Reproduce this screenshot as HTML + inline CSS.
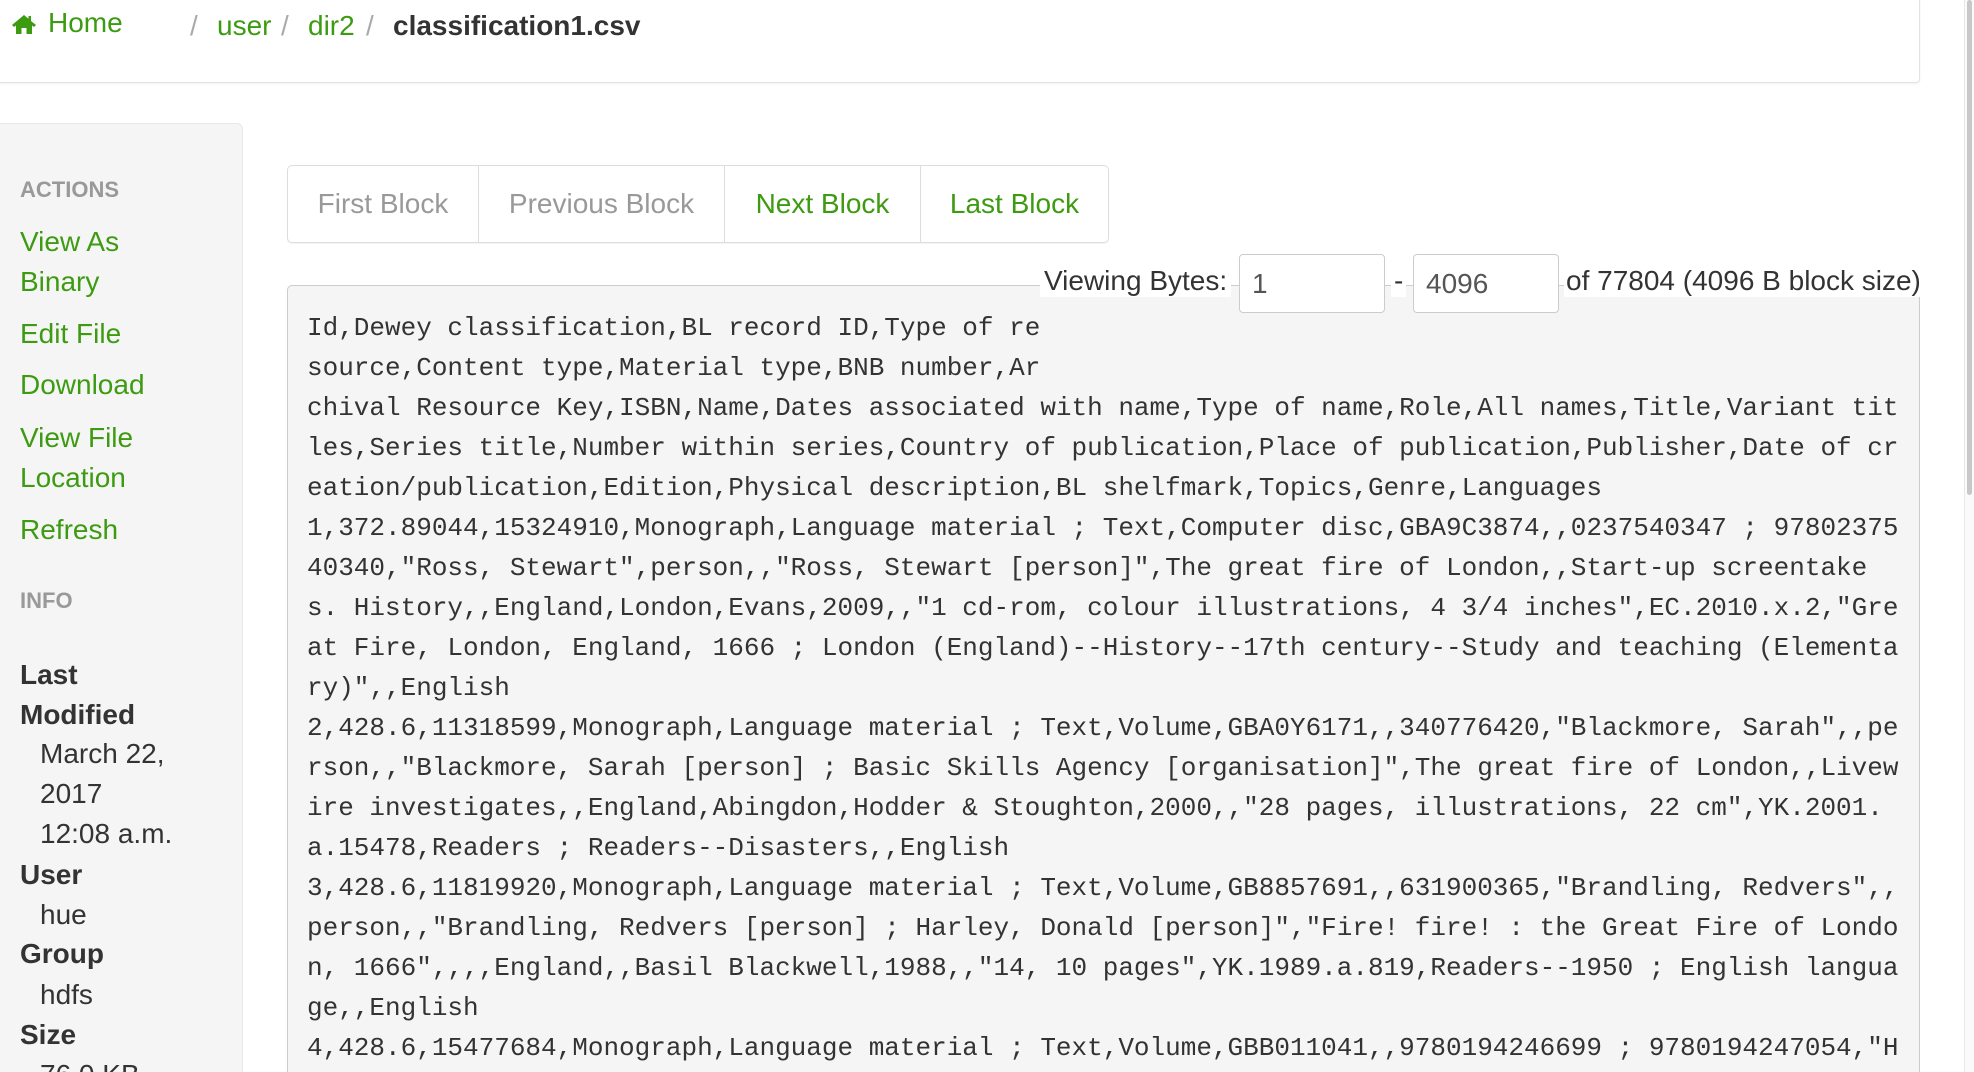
<!DOCTYPE html>
<html style="overflow:hidden;height:1072px"><head><meta charset="utf-8"><style>
*{margin:0;padding:0;box-sizing:border-box}
body{width:1974px;height:1072px;overflow:hidden;background:#fff;font-family:"Liberation Sans",sans-serif;position:relative;color:#333}
.a{position:absolute;white-space:nowrap}
.g{color:#3d9b11}
#top{position:absolute;left:-10px;top:-10px;width:1930px;height:93px;border:1px solid #e3e3e3;border-radius:4px;box-shadow:0 1px 2px rgba(0,0,0,.06)}
#side{position:absolute;left:-10px;top:123px;width:253px;height:960px;background:#f5f5f5;border:1px solid #e8e8e8;border-radius:6px}
.s{position:absolute;left:20px;font-size:28px;line-height:40px;white-space:nowrap}
.h{position:absolute;left:20px;font-size:22px;font-weight:bold;color:#999}
.b{font-weight:bold;color:#333}
#btns{position:absolute;left:287px;top:165px;height:78px;border:1px solid #ddd;border-radius:5px;display:flex;font-size:28px;box-shadow:0 1px 1px rgba(0,0,0,.05)}
#btns div{height:76px;line-height:76px;text-align:center;border-left:1px solid #ddd}
#btns div:first-child{border-left:none}
#pre{position:absolute;left:287px;top:285px;width:1633px;height:820px;background:#f5f5f5;border:1px solid #ccc;border-radius:5px}
#txt{position:absolute;left:307px;top:308px;font-family:"Liberation Mono",monospace;font-size:26px;line-height:40px;color:#333;white-space:pre}
.inp{position:absolute;top:254px;height:59px;width:146px;border:1px solid #ccc;border-radius:4px;background:#fff;font-size:28px;line-height:57px;padding-left:12px;color:#555}
</style></head><body>
<div id="top"></div>
<svg class="a" style="left:11px;top:13px" width="26" height="22" viewBox="0 0 26 22"><path d="M13 2 L1 12 L3 14 L5 12.5 V21 H10.5 V15 H15.5 V21 H21 V12.5 L23 14 L25 12 L20 8 V3 H17.5 V5.8 Z" fill="#3d9b11"/></svg>
<div class="a g" style="left:48px;top:7px;font-size:28px">Home</div>
<div class="a" style="left:190px;top:10px;font-size:28px;color:#aaa">/</div>
<div class="a g" style="left:217px;top:10px;font-size:28px">user</div>
<div class="a" style="left:281px;top:10px;font-size:28px;color:#aaa">/</div>
<div class="a g" style="left:308px;top:10px;font-size:28px">dir2</div>
<div class="a" style="left:366px;top:10px;font-size:28px;color:#aaa">/</div>
<div class="a b" style="left:393px;top:10px;font-size:28px">classification1.csv</div>

<div id="side"></div>
<div class="h" style="top:177px">ACTIONS</div>
<div class="s g" style="top:222px">View As<br>Binary</div>
<div class="s g" style="top:314px">Edit File</div>
<div class="s g" style="top:365px">Download</div>
<div class="s g" style="top:418px">View File<br>Location</div>
<div class="s g" style="top:510px">Refresh</div>
<div class="h" style="top:588px">INFO</div>
<div class="s b" style="top:655px">Last<br>Modified</div>
<div class="s" style="top:734px;left:40px">March 22,<br>2017<br>12:08 a.m.</div>
<div class="s b" style="top:855px">User</div>
<div class="s" style="top:895px;left:40px">hue</div>
<div class="s b" style="top:934px">Group</div>
<div class="s" style="top:975px;left:40px">hdfs</div>
<div class="s b" style="top:1015px">Size</div>
<div class="s" style="top:1055px;left:40px">76.0 KB</div>

<div id="btns"><div style="color:#999;width:190px">First Block</div><div style="color:#999;width:246px">Previous Block</div><div class="g" style="width:196px">Next Block</div><div class="g" style="width:188px">Last Block</div></div>

<div id="pre"></div>
<div class="a" style="left:1040px;top:265px;font-size:28px;background:#fff;padding:0 4px">Viewing Bytes:</div>
<div class="inp" style="left:1239px">1</div>
<div class="a" style="left:1391px;top:265px;font-size:28px;background:#fff;padding:0 3px">-</div>
<div class="inp" style="left:1413px">4096</div>
<div class="a" style="left:1564px;top:265px;font-size:28px;background:#fff;padding:0 2px">of 77804 (4096 B block size)</div>

<div id="txt">Id,Dewey classification,BL record ID,Type of re
source,Content type,Material type,BNB number,Ar
chival Resource Key,ISBN,Name,Dates associated with name,Type of name,Role,All names,Title,Variant tit
les,Series title,Number within series,Country of publication,Place of publication,Publisher,Date of cr
eation/publication,Edition,Physical description,BL shelfmark,Topics,Genre,Languages
1,372.89044,15324910,Monograph,Language material ; Text,Computer disc,GBA9C3874,,0237540347 ; 97802375
40340,"Ross, Stewart",person,,"Ross, Stewart [person]",The great fire of London,,Start-up screentake
s. History,,England,London,Evans,2009,,"1 cd-rom, colour illustrations, 4 3/4 inches",EC.2010.x.2,"Gre
at Fire, London, England, 1666 ; London (England)--History--17th century--Study and teaching (Elementa
ry)",,English
2,428.6,11318599,Monograph,Language material ; Text,Volume,GBA0Y6171,,340776420,"Blackmore, Sarah",,pe
rson,,"Blackmore, Sarah [person] ; Basic Skills Agency [organisation]",The great fire of London,,Livew
ire investigates,,England,Abingdon,Hodder &amp; Stoughton,2000,,"28 pages, illustrations, 22 cm",YK.2001.
a.15478,Readers ; Readers--Disasters,,English
3,428.6,11819920,Monograph,Language material ; Text,Volume,GB8857691,,631900365,"Brandling, Redvers",,
person,,"Brandling, Redvers [person] ; Harley, Donald [person]","Fire! fire! : the Great Fire of Londo
n, 1666",,,,England,,Basil Blackwell,1988,,"14, 10 pages",YK.1989.a.819,Readers--1950 ; English langua
ge,,English
4,428.6,15477684,Monograph,Language material ; Text,Volume,GBB011041,,9780194246699 ; 9780194247054,"H</div>

<div class="a" style="left:1964px;top:0;width:10px;height:1072px;background:#fafafa;border-left:1px solid #e8e8e8"></div>
<div class="a" style="left:1967px;top:0;width:5px;height:495px;background:#c8c8c8;border-radius:3px"></div>
</body></html>
